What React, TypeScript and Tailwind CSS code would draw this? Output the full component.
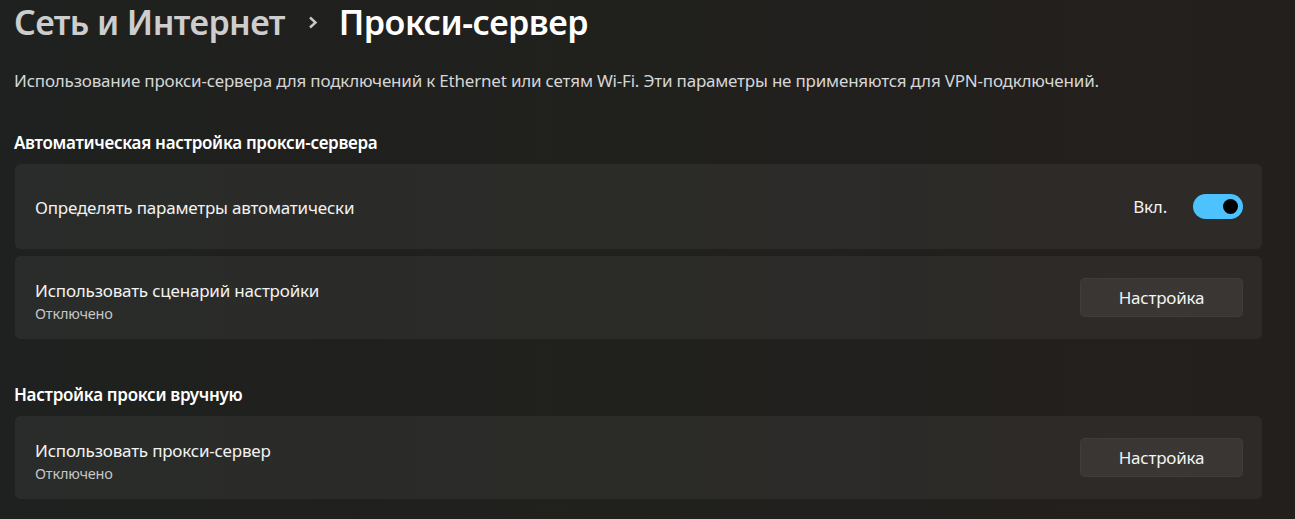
import React from 'react'

const font = { fontFamily: '"Segoe UI", "Noto Sans", "Open Sans", sans-serif' }

function Toggle() {
  return (
    <div className="flex items-center gap-[26px]">
      <span className="text-[17px] tracking-[-0.2px] text-[#f3f3f3]">Вкл.</span>
      <div className="w-[50px] h-[25px] rounded-full bg-[#4cc2ff] flex items-center justify-end pr-[5px]">
        <div className="w-[15px] h-[15px] rounded-full bg-black" />
      </div>
    </div>
  )
}

function SetupButton() {
  return (
    <button className="w-[163px] h-[39px] rounded-[5px] bg-white/[0.06] border border-white/[0.03] text-[17px] tracking-[-0.2px] text-[#f3f3f3]">
      Настройка
    </button>
  )
}

function Card({ title, sub, tall, children }: { title: string; sub?: string; tall?: boolean; children: React.ReactNode }) {
  return (
    <div
      className={`flex items-center justify-between rounded-[6px] bg-white/[0.05] pl-[20px] pr-[19px] ${
        tall ? 'h-[85px]' : 'h-[83px]'
      }`}
    >
      <div className={`flex flex-col ${sub ? 'pt-[6px]' : 'pt-[3px]'}`}>
        <span className="text-[17px] tracking-[-0.2px] leading-[24px] text-[#f2f2f2]">{title}</span>
        {sub && <span className="text-[14.5px] tracking-[-0.2px] leading-[20px] text-[#c5c5c5]">{sub}</span>}
      </div>
      {children}
    </div>
  )
}

export default function App() {
  return (
    <div
      className="w-full h-[519px] overflow-hidden bg-gradient-to-r from-[#1e211f] to-[#231f1c] pl-[15px] pr-[33px]"
      style={font}
    >
      {/* Breadcrumb title */}
      <div className="h-[44px] flex items-center -ml-[1px]">
        <span className="text-[34px] leading-[44px] font-semibold tracking-[-0.6px] text-[#cdcdcd]">Сеть и Интернет</span>
        <svg className="ml-[23px] mr-[21px] mt-[1px]" width="10" height="13" viewBox="0 0 10 13">
          <path d="M2 1.5 L7.5 6.5 L2 11.5" fill="none" stroke="#c8c8c8" strokeWidth="2.4" />
        </svg>
        <span className="text-[34px] leading-[44px] font-semibold tracking-[-0.5px] text-white">Прокси-сервер</span>
      </div>

      <div className="mt-[23px] h-[28px] flex items-center -ml-[1px]">
        <span className="text-[17px] tracking-[-0.2px] text-[#d6d6d6]">
          Использование прокси-сервера для подключений к Ethernet или сетям Wi-Fi. Эти параметры не применяются для VPN-подключений.
        </span>
      </div>

      <div className="mt-[34px] h-[28px] flex items-center -ml-[1px]">
        <span className="text-[17px] font-semibold tracking-[-0.3px] text-white">Автоматическая настройка прокси-сервера</span>
      </div>

      <div className="mt-[7px] flex flex-col gap-[7px]">
        <Card title="Определять параметры автоматически" tall>
          <Toggle />
        </Card>
        <Card title="Использовать сценарий настройки" sub="Отключено">
          <SetupButton />
        </Card>
      </div>

      <div className="mt-[42px] h-[28px] flex items-center -ml-[1px]">
        <span className="text-[17px] font-semibold tracking-[-0.3px] text-white">Настройка прокси вручную</span>
      </div>

      <div className="mt-[7px]">
        <Card title="Использовать прокси-сервер" sub="Отключено">
          <SetupButton />
        </Card>
      </div>
    </div>
  )
}
